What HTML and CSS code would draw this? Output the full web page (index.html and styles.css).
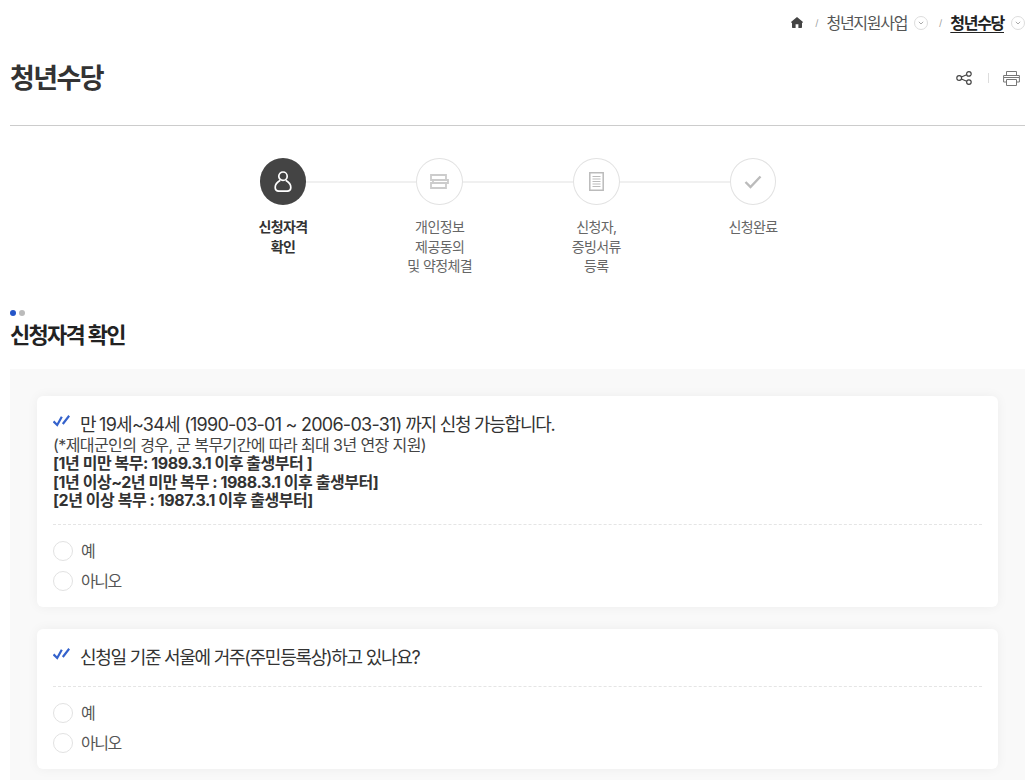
FILE: index.html
```html
<!DOCTYPE html>
<html lang="ko">
<head>
  <meta charset="UTF-8">
  <meta name="viewport" content="width=device-width, initial-scale=1.0">
  <title>청년수당</title>
  <link rel="stylesheet" href="styles.css">
</head>
<body>
  <div class="wrap">
    <nav class="crumbs">
      <svg class="home-icon" width="12" height="11" viewBox="0 0 12 11"><path d="M6 0 .3 4.800c-.5.500 0 1.300.7 1V10c0 .6.400 1 1 1h2.600V7.300h2.800V11H10c.6 0 1-.4 1-1V5.800c.7.300 1.200-.5.700-1z" fill="#444"/></svg>
      <span class="sep">/</span>
      <span class="crumb">청년지원사업</span>
      <span class="drop"><svg width="6" height="4" viewBox="0 0 6 4"><path d="M.8.8 3 3l2.200-2.200" fill="none" stroke="#aaa"/></svg></span>
      <span class="sep">/</span>
      <span class="crumb current">청년수당</span>
      <span class="drop"><svg width="6" height="4" viewBox="0 0 6 4"><path d="M.8.8 3 3l2.200-2.200" fill="none" stroke="#aaa"/></svg></span>
    </nav>

    <header class="title-row">
      <h1>청년수당</h1>
      <div class="tools">
        <svg width="16" height="14" viewBox="0 0 16 14" fill="none" stroke="#444" stroke-width="1.200"><circle cx="3.200" cy="7" r="2.400"/><circle cx="12.900" cy="2.900" r="2.300"/><circle cx="12.900" cy="11.100" r="2.300"/><path d="m5.400 6 5.300-2.200M5.400 8l5.300 2.200"/></svg>
        <span class="tool-sep"></span>
        <svg width="17" height="15" viewBox="0 0 17 15" fill="none" stroke="#777"><path d="M3.500 4.500v-4h10v4M3.500 11H.6V4.500h15.800V11h-2.900"/><path d="M3.500 8.500h10v6h-10z"/><path d="M1 6.500h15"/></svg>
      </div>
    </header>

    <ol class="steps">
      <li class="step active">
        <span class="step-circle">
          <svg width="18" height="21" viewBox="0 0 18 21" fill="none" stroke="#fff" stroke-width="1.700"><circle cx="9" cy="5.200" r="4.200"/><path d="M6.300 9.300C3.300 11 1.200 13.500 1.200 16.300c0 2.700 1.500 3.900 3.700 3.900h8.200c2.200 0 3.700-1.200 3.700-3.900 0-2.800-2.100-5.300-5.100-7"/></svg>
        </span>
        <span class="step-label">신청자격<br>확인</span>
      </li>
      <li class="step">
        <span class="step-circle">
          <svg width="19" height="15" viewBox="0 0 19 15" fill="none" stroke="#ccc" stroke-width="1.800"><path d="M1 1h15v5H1zM3 6h15v3H3zM1 9h15v5H1z"/></svg>
        </span>
        <span class="step-label">개인정보<br>제공동의<br>및 약정체결</span>
      </li>
      <li class="step">
        <span class="step-circle">
          <svg width="15" height="19" viewBox="0 0 15 19" fill="none" stroke="#bbb"><path d="M.8.800h13.400v17.400H.8z" stroke-width="1.500"/><path d="M3.500 4.500h8M3.500 7h8M3.500 9.500h8M3.500 12h8M3.500 14.500h8"/></svg>
        </span>
        <span class="step-label">신청자,<br>증빙서류<br>등록</span>
      </li>
      <li class="step">
        <span class="step-circle">
          <svg width="18" height="14" viewBox="0 0 18 14" fill="none" stroke="#bbb" stroke-width="2.400"><path d="M1.500 7l5 5L16.500 1.500"/></svg>
        </span>
        <span class="step-label">신청완료</span>
      </li>
    </ol>

    <div class="dots"><i></i><i></i></div>
    <h2>신청자격 확인</h2>

    <section class="panel">
      <div class="card">
        <div class="question">
          <svg class="check" width="17" height="12" viewBox="0 0 17 12" fill="none" stroke="#3462cc" stroke-width="2.200"><path d="M.5 6.400l3.700 3.600L8.800 1.800M9.800 9 16.200.8"/></svg>
          <p class="q-main">만 <span class="num">19세~34세 (1990-03-01 ~ 2006-03-31)</span> 까지 신청 가능합니다.</p>
        </div>
        <div class="q-note">
          (*제대군인의 경우, 군 복무기간에 따라 최대 3년 연장 지원)<br>
          <b>[1년 미만 복무: 1989.3.1 이후 출생부터 ]</b><br>
          <b>[1년 이상~2년 미만 복무 : 1988.3.1 이후 출생부터]</b><br>
          <b>[2년 이상 복무 : 1987.3.1 이후 출생부터]</b>
        </div>
        <div class="options">
          <label class="option"><span class="radio"></span><span class="option-text">예</span></label>
          <label class="option"><span class="radio"></span><span class="option-text">아니오</span></label>
        </div>
      </div>
      <div class="card">
        <div class="question">
          <svg class="check" width="17" height="12" viewBox="0 0 17 12" fill="none" stroke="#3462cc" stroke-width="2.200"><path d="M.5 6.400l3.700 3.600L8.800 1.800M9.800 9 16.200.8"/></svg>
          <p class="q-main">신청일 기준 서울에 거주(주민등록상)하고 있나요?</p>
        </div>
        <div class="options">
          <label class="option"><span class="radio"></span><span class="option-text">예</span></label>
          <label class="option"><span class="radio"></span><span class="option-text">아니오</span></label>
        </div>
      </div>
    </section>
  </div>
</body>
</html>
```

FILE: styles.css
```css
html {
  overflow: hidden;
}
body {
  margin: 0;
  background: #fff;
  color: #333;
  font-family: Inter, "Noto Sans CJK KR", sans-serif;
}
.wrap {
  margin: 0 2px 0 10px;
}

/* breadcrumb */
.crumbs {
  display: flex;
  align-items: center;
  justify-content: flex-end;
  height: 45px;
  font-size: 16px;
  letter-spacing: -1.3px;
  color: #555;
}
.home-icon {
  margin-right: 12px;
}
.sep {
  margin: 0 8px 0 0;
  font-size: 9px;
  letter-spacing: 0;
  color: #999;
}
.crumb {
  margin-bottom: 2px;
}
.crumb.current {
  font-weight: 700;
  color: #222;
  text-decoration: underline;
  text-underline-offset: 3px;
}
.drop {
  display: flex;
  align-items: center;
  justify-content: center;
  box-sizing: border-box;
  width: 14px;
  height: 14px;
  margin: 0 11px 0 7px;
  border: 1px solid #ddd;
  border-radius: 50%;
}
.crumb.current + .drop {
  margin-right: 0;
}

/* title */
.title-row {
  display: flex;
  align-items: center;
  justify-content: space-between;
  height: 80px;
  border-bottom: 1px solid #ccc;
}
.title-row h1 {
  margin: 0 0 17px;
  font-size: 27px;
  font-weight: 700;
  letter-spacing: -1.6px;
  color: #333;
}
.tools {
  display: flex;
  align-items: center;
  margin: 0 5px 14px 0;
}
.tool-sep {
  width: 1px;
  height: 10px;
  margin: 0 14px 0 16px;
  background: #ddd;
}

/* steps */
.steps {
  display: flex;
  justify-content: center;
  height: 152px;
  margin: 32px 0 0 1px;
  padding: 0;
  list-style: none;
}
.step {
  position: relative;
  display: flex;
  flex-direction: column;
  align-items: center;
  width: 156.67px;
}
.step:not(:last-child)::after {
  content: "";
  position: absolute;
  top: 23px;
  left: 50%;
  width: 100%;
  height: 2px;
  background: #f0f0f0;
}
.step-circle {
  position: relative;
  z-index: 1;
  display: flex;
  align-items: center;
  justify-content: center;
  box-sizing: border-box;
  width: 46.5px;
  height: 47px;
  border: 1px solid #e2e2e2;
  border-radius: 50%;
  background: #fff;
}
.step.active .step-circle {
  border: 0;
  background: #444;
}
.step-label {
  margin-top: 12px;
  font-size: 14px;
  line-height: 19.5px;
  letter-spacing: -0.6px;
  text-align: center;
  color: #666;
}
.step.active .step-label {
  font-weight: 700;
  color: #333;
}

/* section heading */
.dots {
  display: flex;
  gap: 3px;
  height: 6px;
}
.dots i {
  width: 6px;
  height: 6px;
  border-radius: 50%;
  background: #bbb;
}
.dots i:first-child {
  background: #2455c8;
}
h2 {
  margin: 1px 0 0;
  font-size: 22px;
  line-height: 36px;
  font-weight: 700;
  letter-spacing: -1.7px;
  color: #222;
}

/* question cards */
.panel {
  margin-top: 16px;
  padding: 27px;
  background: #f9f9f9;
}
.card {
  margin-bottom: 22px;
  padding: 17px 16px 11px;
  border-radius: 6px;
  background: #fff;
  box-shadow: 0 0 12px rgba(0, 0, 0, 0.05);
}
.question {
  display: flex;
  align-items: flex-start;
}
.check {
  flex: none;
  margin: 2px 10px 0 0;
}
.q-main {
  margin: 0;
  font-size: 18px;
  line-height: 23px;
  letter-spacing: -1.27px;
  color: #333;
}
.q-main .num {
  letter-spacing: -0.75px;
}
.q-note {
  font-size: 16px;
  line-height: 18.4px;
  letter-spacing: -0.6px;
  color: #444;
}
.q-note b {
  letter-spacing: -0.45px;
  color: #333;
}
.options {
  margin-top: 14px;
  padding-top: 11px;
  border-top: 1px dashed #e5e5e5;
}
.question + .options {
  margin-top: 17px;
}
.option {
  display: flex;
  align-items: center;
  height: 30px;
  font-size: 16px;
  letter-spacing: -1.5px;
  color: #555;
}
.option-text {
  margin-bottom: 2px;
}
.radio {
  box-sizing: border-box;
  width: 20px;
  height: 20px;
  margin-right: 8px;
  border: 1px solid #e2e2e2;
  border-radius: 50%;
}
```
